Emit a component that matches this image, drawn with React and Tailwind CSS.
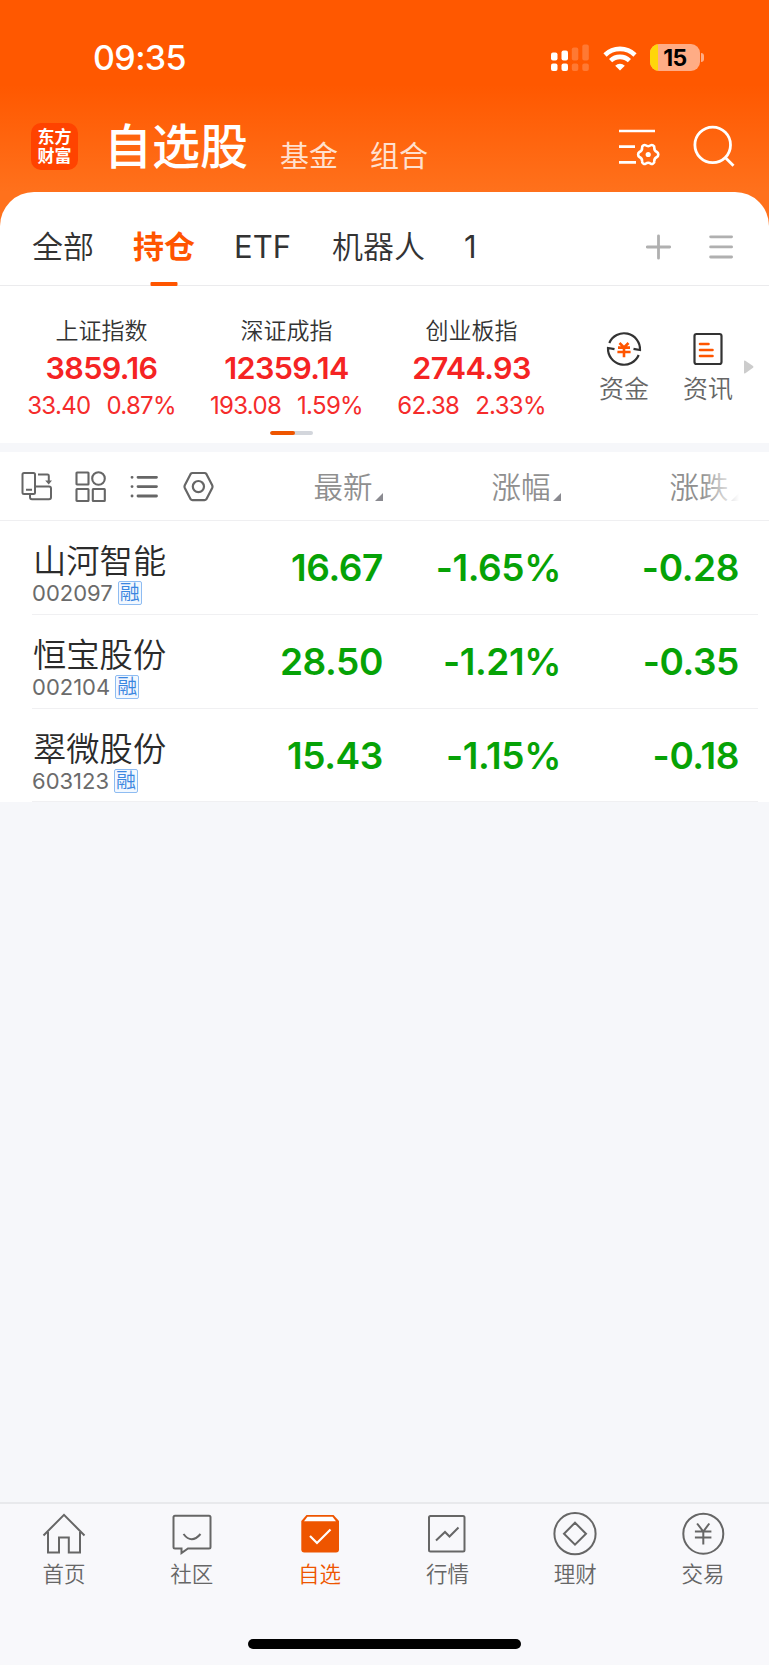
import { useState } from "react"

const indices = [
  { name: "上证指数", value: "3859.16", change: "33.40", percent: "0.87%" },
  { name: "深证成指", value: "12359.14", change: "193.08", percent: "1.59%" },
  { name: "创业板指", value: "2744.93", change: "62.38", percent: "2.33%" }
]

const stocks = [
  { name: "山河智能", code: "002097", price: "16.67", percent: "-1.65%", change: "-0.28" },
  { name: "恒宝股份", code: "002104", price: "28.50", percent: "-1.21%", change: "-0.35" },
  { name: "翠微股份", code: "603123", price: "15.43", percent: "-1.15%", change: "-0.18" }
]

const StatusBar = () => (
  <div className="flex h-[115px] items-center justify-between pl-[93px] pr-[65px] text-white">
    <span className="text-[34px] font-medium leading-none tracking-[-0.6px]">09:35</span>
    <div className="flex items-center">
      <svg width="38" height="28" viewBox="0 0 38 28" fill="#fff" className="mr-[14px]">
        <rect x="0" y="8.5" width="6.5" height="8" rx="2" />
        <rect x="10.5" y="6.5" width="6.5" height="10" rx="2" />
        <rect x="20.8" y="3.5" width="6.5" height="13" rx="2" opacity=".2" />
        <rect x="31.3" y="0.5" width="6.5" height="16" rx="2" opacity=".2" />
        <rect x="0" y="19.5" width="6.5" height="7.5" rx="2" />
        <rect x="10.5" y="19.5" width="6.5" height="7.5" rx="2" />
        <rect x="20.8" y="19.5" width="6.5" height="7.5" rx="2" opacity=".2" />
        <rect x="31.3" y="19.5" width="6.5" height="7.5" rx="2" opacity=".2" />
      </svg>
      <svg width="34" height="26" viewBox="0 0 34 26" fill="none" stroke="#fff" strokeWidth="4.6" className="mr-[13px]">
        <path d="M2 10a21.5 21.5 0 0 1 30 0" />
        <path d="M7.6 15.6a13.6 13.6 0 0 1 18.8 0" />
        <path d="M17 25.5l-4.8-4.8a7 7 0 0 1 9.6 0z" fill="#fff" stroke="none" />
      </svg>
      <div className="relative flex h-[27px] w-[50px] items-center justify-center overflow-hidden rounded-[9px] bg-[#ffac85]">
        <div className="absolute left-0 top-0 h-full w-[8px] bg-[#ffd60a]" />
        <span className="relative mt-[1px] text-[23px] font-bold leading-none tracking-[-0.5px] text-black">15</span>
      </div>
      <div className="ml-[1px] h-[9px] w-[3px] rounded-r-full bg-[#ffac85]" />
    </div>
  </div>
)

const TitleBar = () => (
  <div className="flex h-[77px] pl-[31px] text-white">
    <div className="mt-[8px] flex h-[47px] w-[47px] flex-col items-center justify-center rounded-[10px] bg-[#ff4300] text-[17px] font-bold leading-[19px]">
      <span>东方</span>
      <span>财富</span>
    </div>
    <h1 className="ml-[26px] mt-[8px] text-[48px] font-medium leading-[48px]">自选股</h1>
    <span className="ml-[32px] mt-[27px] text-[29px] leading-[29px] text-[#ffe0cf]">基金</span>
    <span className="ml-[32px] mt-[27px] text-[29px] leading-[29px] text-[#ffe0cf]">组合</span>
    <svg width="43" height="40" viewBox="0 0 43 40" fill="none" stroke="#fff" strokeWidth="2.6" className="ml-auto mt-[12px]">
      <path d="M0 4h36M0 19.6h16M0 35.4h17" />
      <path
        d="M24.4 18.3q1.2-.7 2.2 0 2.6 1.8 5.2 0 1-.7 2.2 0 1.6.9 1.3 2.3-.2 3.2 2.6 4.4 1.4.8 1.4 2.5t-1.4 2.5q-2.8 1.2-2.6 4.4.3 1.4-1.3 2.3-1.2.7-2.2 0-2.6-1.8-5.2 0-1 .7-2.2 0-1.6-.9-1.3-2.3.2-3.2-2.6-4.4-1.4-.8-1.4-2.5t1.4-2.5q2.8-1.2 2.6-4.4-.3-1.4 1.3-2.3z"
      />
      <circle cx="29.2" cy="27.5" r="2.6" fill="#fff" stroke="none" />
    </svg>
    <svg width="43" height="43" viewBox="0 0 43 43" fill="none" stroke="#fff" strokeWidth="2.8" className="ml-[31px] mr-[33px] mt-[10px]">
      <circle cx="19.7" cy="19.9" r="17.8" />
      <path d="M32 32.2l8.5 8.5" />
    </svg>
  </div>
)

const GroupTabs = () => {
  const [active, setActive] = useState("持仓")
  const tabs = [
    { label: "全部", style: "ml-[32px] font-[350]" },
    { label: "持仓", style: "ml-[39px]" },
    { label: "ETF", style: "ml-[39px]" },
    { label: "机器人", style: "ml-[41px] font-[350]" },
    { label: "1", style: "ml-[39px]" }
  ]

  return (
    <div className="flex h-[94px] border-b border-[#ebebed] text-[31px] text-[#333]">
      {tabs.map((t) => (
        <button
          key={t.label}
          onClick={() => setActive(t.label)}
          className={`relative ${t.style} pt-[15px] leading-[80px] ${
            active === t.label ? "h-[95px] font-bold text-[#ff5500]" : "h-[93px]"
          }`}
        >
          {t.label}
          {active === t.label && (
            <span className="absolute bottom-[1px] left-1/2 h-[4px] w-[27px] -translate-x-1/2 rounded-[1px] bg-[#ff5500]" />
          )}
        </button>
      ))}
      <svg width="26" height="26" viewBox="0 0 26 26" stroke="#b0b0b0" strokeWidth="2.8" strokeLinecap="round" className="ml-auto mt-[42px]">
        <path d="M12.5 1.8v22.4M1.3 13h22.4" />
      </svg>
      <svg width="24" height="26" viewBox="0 0 24 26" stroke="#b0b0b0" strokeWidth="2.8" strokeLinecap="round" className="ml-[37px] mr-[36px] mt-[42px]">
        <path d="M1.6 2.8h21M1.6 12.9h21M1.6 23h21" />
      </svg>
    </div>
  )
}

const IndexPanel = () => (
  <div className="relative flex h-[157px]">
    <div className="ml-[9px] flex w-[556px]">
      {indices.map((item) => (
        <div key={item.name} className="flex w-[185px] flex-col items-center whitespace-nowrap pt-[33px]">
          <div className="text-[23px] font-[350] leading-[24px] text-[#333]">{item.name}</div>
          <div className="mt-[10px] text-[30.5px] font-semibold leading-[30px] tracking-[-0.6px] text-[#f52323]">{item.value}</div>
          <div className="mt-[10px] flex gap-[16px] text-[24px] leading-[26px] tracking-[-0.7px] text-[#f52b2b]">
            <span>{item.change}</span>
            <span>{item.percent}</span>
          </div>
        </div>
      ))}
    </div>
    <div className="ml-[34px] flex w-[50px] flex-col items-center pt-[45px]">
      <svg width="36" height="36" viewBox="0 0 36 36" fill="none" stroke="#333" strokeWidth="2.2">
        <path d="M3.3 12A16 16 0 0 1 34 19l-6.5-1.2" />
        <path d="M32.7 24A16 16 0 0 1 2 17l6.5 1.2" />
        <path d="M13.5 12l4.5 4.5 4.5-4.5M12 16.6h12M11.4 21h13.2M18 16v10.3" stroke="#ff5500" strokeWidth="2.6" />
      </svg>
      <span className="mt-[9px] text-[25px] font-[350] leading-[26px] text-[#666]">资金</span>
    </div>
    <div className="ml-[34px] flex w-[50px] flex-col items-center pt-[45px]">
      <svg width="30" height="36" viewBox="0 0 30 36" fill="none" stroke="#333" strokeWidth="2.2">
        <rect x="1.5" y="3" width="27" height="30" rx="2" />
        <path d="M7 13h8.5M7 19h12.5M7 25h12.5" stroke="#ff5500" strokeWidth="2.6" strokeLinecap="round" />
      </svg>
      <span className="mt-[9px] text-[25px] font-[350] leading-[26px] text-[#666]">资讯</span>
    </div>
    <svg width="10" height="14" viewBox="0 0 10 14" fill="#ccc" className="ml-[11px] mt-[74px]">
      <path d="M0 1.5Q0 0 1.3.8L9 6q1 .9 0 1.8L1.3 13.2Q0 13.8 0 12.5z" />
    </svg>
    <div className="absolute left-[270px] top-[145px] flex h-[4px] w-[43px] overflow-hidden rounded-full bg-[#d3d6dc]">
      <div className="w-[25px] rounded-full bg-[#ee5500]" />
    </div>
  </div>
)

const SortLabel = ({ label, className }) => (
  <div className={`flex items-end ${className}`}>
    <span className="text-[29.5px] font-[350] leading-[30px]">{label}</span>
    <svg width="8" height="8" viewBox="0 0 8 8" fill="#8a8a90" className="mb-[1px] ml-[2.5px]">
      <path d="M8 0v8H0z" />
    </svg>
  </div>
)

const ListHeader = () => (
  <div className="flex h-[69px] border-b border-[#efeff1] text-[#8f8f8f]">
    <div className="flex w-[213px] items-start pl-[20px] pt-[19px]">
      <svg width="33" height="32" viewBox="0 0 33 32" fill="none" stroke="#666" strokeWidth="2" className="shrink-0">
        <rect x="2.5" y="2" width="12.5" height="21" rx="1.5" />
        <path d="M6 18.7h6M18 3.5h9.5q1.3 0 1.3 1.3v7" />
        <path d="M25.2 9.5l3.5 4 3.3-4z" fill="#666" stroke="none" />
        <path d="M15.5 15.5h13.5q2 0 2 2v8.7q0 2-2 2H12q-2 0-2-2V23.5" />
      </svg>
      <svg width="32" height="32" viewBox="0 0 32 32" fill="none" stroke="#666" strokeWidth="2.1" className="ml-[21px] shrink-0">
        <rect x="2.5" y="1.5" width="12" height="12" rx=".5" />
        <circle cx="24.5" cy="7.5" r="6.3" />
        <rect x="2.5" y="18" width="12" height="12" rx=".5" />
        <rect x="18.8" y="18" width="12" height="12" rx=".5" />
      </svg>
      <svg width="28" height="32" viewBox="0 0 28 32" stroke="#666" strokeWidth="2.8" strokeLinecap="round" className="ml-[24px] shrink-0">
        <path d="M8 6.3h18.5M8 15.6h18.5M8 25h18.5M2 6.3h.1M2 15.6h.1M2 25h.1" />
      </svg>
      <svg width="31" height="32" viewBox="0 0 31 32" fill="none" stroke="#666" strokeWidth="2.2" className="ml-[25px] shrink-0">
        <path d="M9.5 2h12q1.2 0 1.9 1l5.8 11.3q.6 1.3 0 2.6L23.4 28.2q-.7 1-1.9 1h-12q-1.2 0-1.9-1L1.8 16.9q-.6-1.3 0-2.6L7.6 3q.7-1 1.9-1z" />
        <circle cx="15.4" cy="15.6" r="5.6" />
      </svg>
    </div>
    <div className="relative flex pt-[19px]">
      <SortLabel label="最新" className="h-[31px] w-[170px] justify-end" />
      <SortLabel label="涨幅" className="h-[31px] w-[178px] justify-end" />
      <SortLabel label="涨跌" className="h-[31px] w-[178px] justify-end" />
      <div className="absolute right-0 top-0 h-[66px] w-[38px] bg-linear-to-r from-transparent to-white" />
    </div>
  </div>
)

const StockRow = ({ stock }) => (
  <div className="ml-[32px] mr-[11px] flex h-[94px] border-b border-[#f0f0f2] last:h-[93px]">
    <div className="w-[181px] pt-[23px]">
      <div className="ml-[1px] text-[33.3px] font-[350] leading-[35px] text-[#2b2b2b]">{stock.name}</div>
      <div className="mt-[2px] flex items-center">
        <span className="text-[22px] leading-[24px] text-[#6b6b6b]">{stock.code}</span>
        <span className="ml-[5px] flex h-[24px] w-[24px] items-center justify-center rounded-[2px] border border-[#8ebcf2] bg-[#f2f8ff] text-[20px] font-[350] leading-none text-[#3a86e0]">
          融
        </span>
      </div>
    </div>
    <div className="flex pt-[28px] text-[37px] font-semibold leading-[38px] tracking-[-0.4px] text-[#06a206]">
      <span className="w-[170px] text-right">{stock.price}</span>
      <span className="w-[178px] text-right">{stock.percent}</span>
      <span className="w-[178px] text-right">{stock.change}</span>
    </div>
  </div>
)

const navItems = [
  {
    label: "首页",
    icon: (
      <>
        <path d="M1.5 23.5L22 2.8l20.5 20.7" />
        <path d="M6 20v20.5h11V25.5h9.8v15H38V20" />
      </>
    )
  },
  {
    label: "社区",
    icon: (
      <>
        <path d="M5 3.8h34q1.5 0 1.5 1.5v29.7q0 1.5-1.5 1.5H18l-6.5 4.6v-4.6H5q-1.5 0-1.5-1.5V5.3q0-1.5 1.5-1.5z" />
        <path d="M13.5 22q8 10.5 17 0" />
      </>
    )
  },
  {
    label: "自选",
    icon: (
      <>
        <path d="M8.5 3h27l5.5 6v28.5q0 3-3 3H6.3q-3 0-3-3V9z" fill="#ee5500" stroke="none" />
        <path d="M9.5 4.8h25l3.5 4.4H6z" fill="#fff" stroke="none" />
        <path d="M12 24l7 7L32.5 17.5" stroke="#fff" strokeWidth="2.2" />
      </>
    )
  },
  {
    label: "行情",
    icon: (
      <>
        <rect x="4" y="4" width="35.5" height="35.5" rx="1.5" />
        <path d="M11 28.5l9-8.5 4.5 4.5L33.5 15.5" />
      </>
    )
  },
  {
    label: "理财",
    icon: (
      <>
        <circle cx="22" cy="21.7" r="20.6" />
        <path d="M22 10.7l11 11-11 11-11-11z" />
      </>
    )
  },
  {
    label: "交易",
    icon: (
      <>
        <circle cx="22.3" cy="21.7" r="20" />
        <path d="M16.1 11.5l6.2 8 6-8M13.9 19.4h16.5M13.9 25.5h16.5M22.3 19.4v13" />
      </>
    )
  }
]

const BottomNav = () => {
  const [current, setCurrent] = useState("自选")

  return (
    <nav className="flex h-[163px] flex-col border-t-2 border-[#e8e9ec] bg-[#f8f8fb]">
      <div className="flex pr-[2px]">
        {navItems.map((item) => (
          <button
            key={item.label}
            onClick={() => setCurrent(item.label)}
            className={`flex flex-1 flex-col items-center pt-[8px] ${current === item.label ? "text-[#ee5500]" : "text-[#666]"}`}
          >
            <svg width="44" height="44" viewBox="0 0 44 44" fill="none" stroke="currentColor" strokeWidth="2">
              {item.icon}
            </svg>
            <span className="mt-[6px] text-[21.5px] font-[350] leading-[24px]">{item.label}</span>
          </button>
        ))}
      </div>
      <div className="mx-auto mb-[16px] mt-auto h-[10px] w-[273px] rounded-full bg-black" />
    </nav>
  )
}

export default function App() {
  return (
    <div className="flex h-[1665px] w-[769px] flex-col overflow-hidden bg-[#f6f7fa] font-['Inter','Noto_Sans_CJK_SC',sans-serif]">
      <div className="bg-[linear-gradient(180deg,#ff5800_0px,#ff5800_85px,#ff711c_192px,#ff711c_100%)]">
        <StatusBar />
        <TitleBar />
        <div className="rounded-t-[34px] bg-white">
          <GroupTabs />
        </div>
      </div>
      <div className="bg-white">
        <IndexPanel />
      </div>
      <div className="mt-[9px] bg-white">
        <ListHeader />
        {stocks.map((s) => (
          <StockRow key={s.code} stock={s} />
        ))}
      </div>
      <div className="flex-1" />
      <BottomNav />
    </div>
  )
}
